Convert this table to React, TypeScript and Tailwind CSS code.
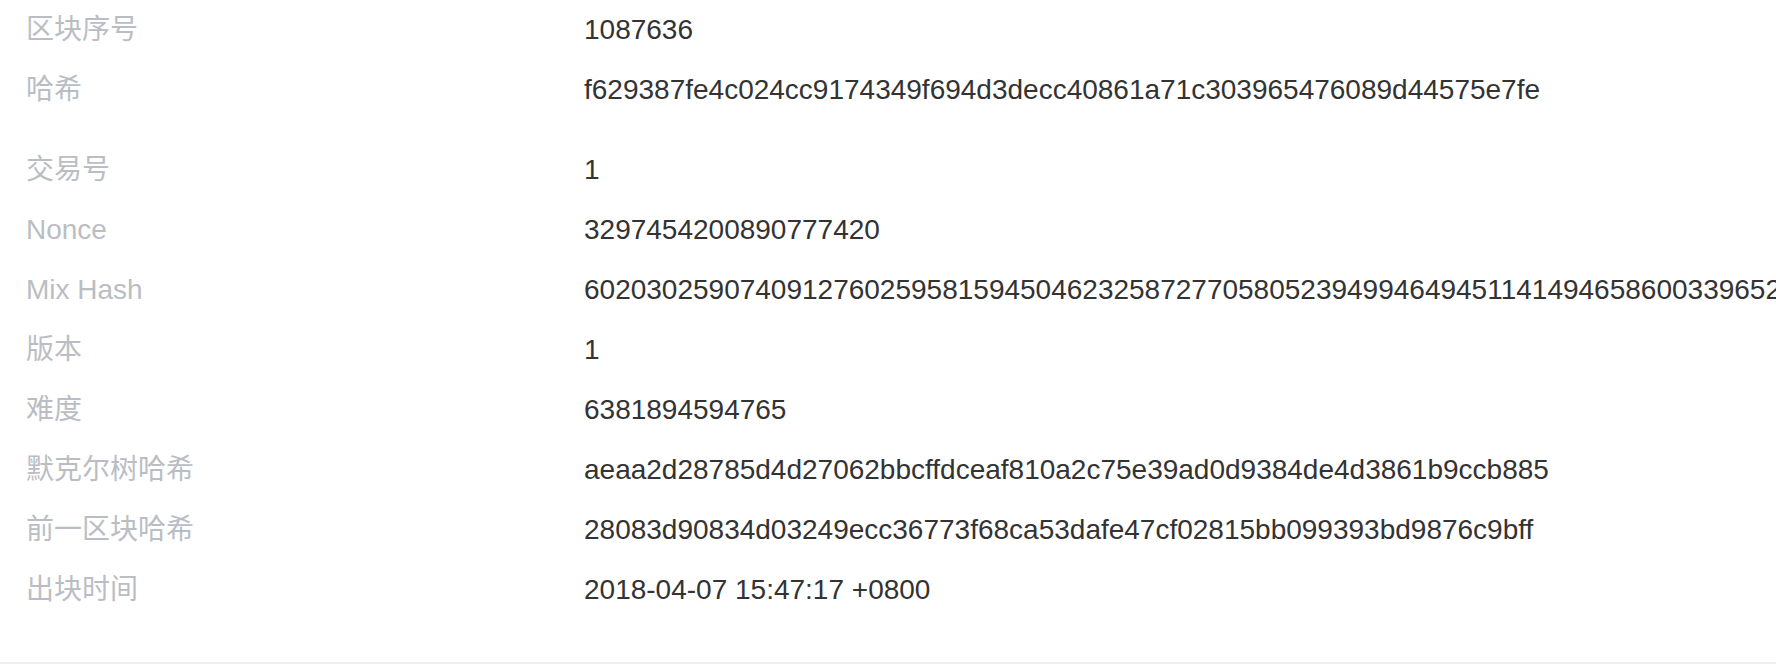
import React from "react";

const section1: [string, string][] = [
  ["区块序号", "1087636"],
  ["哈希", "f629387fe4c024cc9174349f694d3decc40861a71c303965476089d44575e7fe"],
];

const section2: [string, string][] = [
  ["交易号", "1"],
  ["Nonce", "3297454200890777420"],
  ["Mix Hash", "602030259074091276025958159450462325872770580523949946494511414946586003396522807"],
  ["版本", "1"],
  ["难度", "6381894594765"],
  ["默克尔树哈希", "aeaa2d28785d4d27062bbcffdceaf810a2c75e39ad0d9384de4d3861b9ccb885"],
  ["前一区块哈希", "28083d90834d03249ecc36773f68ca53dafe47cf02815bb099393bd9876c9bff"],
  ["出块时间", "2018-04-07 15:47:17 +0800"],
];

function Row({ label, value }: { label: string; value: string }) {
  return (
    <div className="flex h-[60px] items-center whitespace-nowrap">
      <div className="w-[558px] shrink-0 text-[#babec4]">{label}</div>
      <div className="text-[#333333]">{value}</div>
    </div>
  );
}

export default function App() {
  return (
    <div
      className="w-[1776px] h-[664px] overflow-hidden bg-white flex flex-col text-[28px]"
      style={{ fontFamily: '"Liberation Sans", "Noto Sans CJK SC", sans-serif' }}
    >
      <div className="flex-1 pl-[26px]">
        <div className="flex flex-col">
          {section1.map(([l, v]) => (
            <Row key={l} label={l} value={v} />
          ))}
        </div>
        <div className="mt-[20px] flex flex-col">
          {section2.map(([l, v]) => (
            <Row key={l} label={l} value={v} />
          ))}
        </div>
      </div>
      <div className="h-[2px] bg-[#efefef]" />
    </div>
  );
}
